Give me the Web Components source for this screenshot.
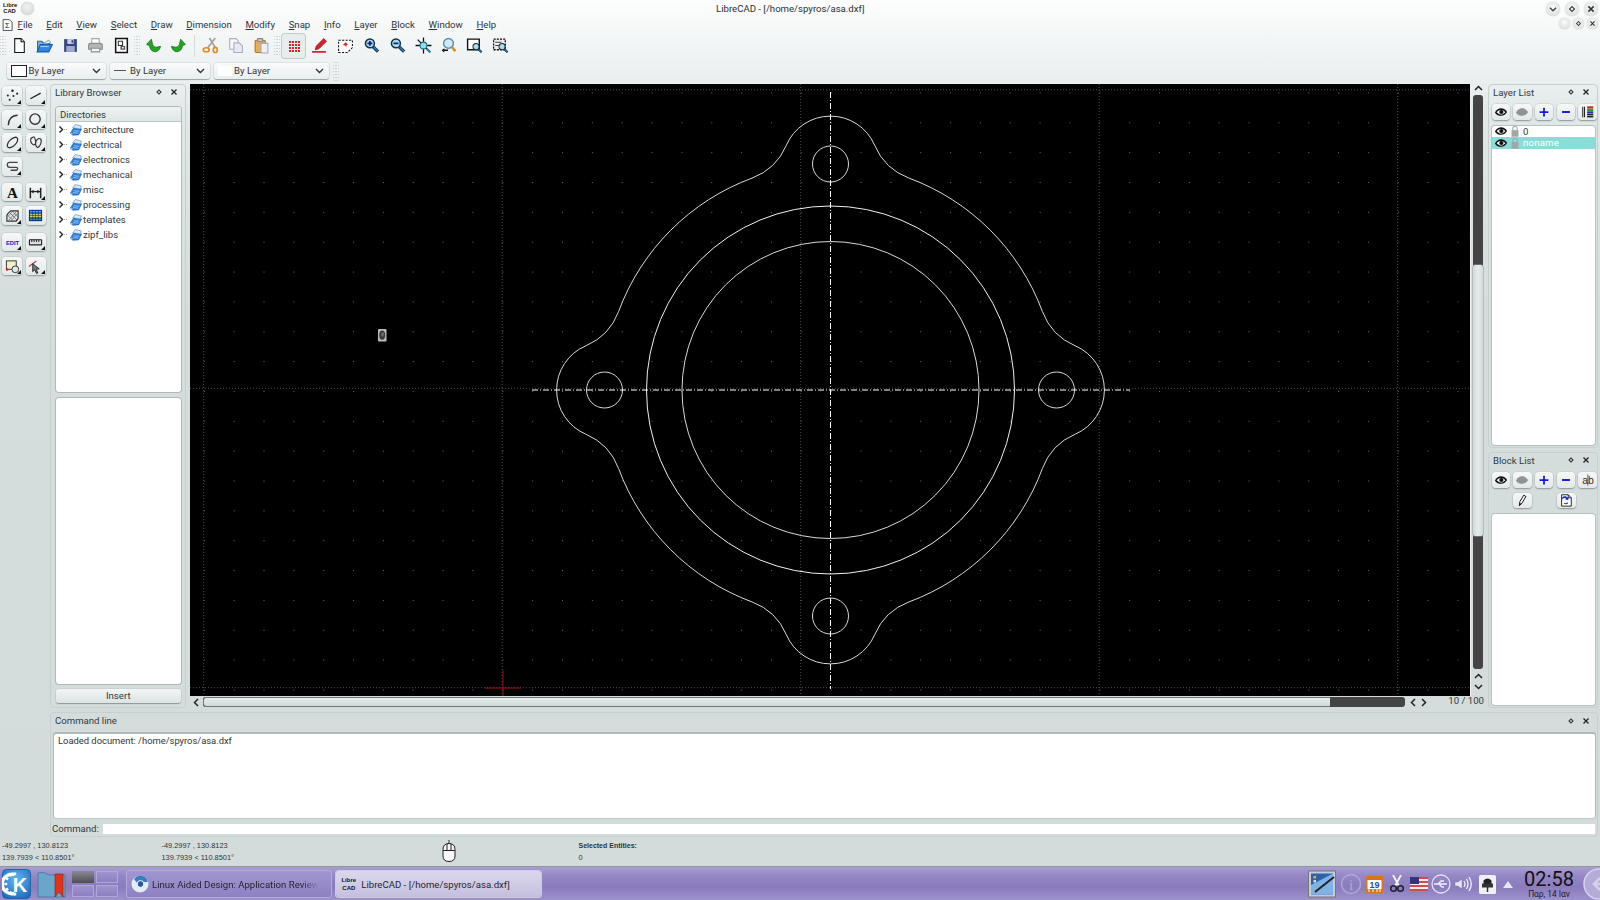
<!DOCTYPE html>
<html>
<head>
<meta charset="utf-8">
<title>LibreCAD</title>
<style>
html, body { margin: 0; height: 900px; overflow: hidden; }
body {
    display: flex;
    flex-direction: column;
    width: 1600px;
    font: 9.6px Roboto, "Noto Sans", sans-serif;
    color: #2b3033;
    background: linear-gradient(#fdfdfd 0, #f1f4f4 50px, #dfe6e6 130px, #d6dedd 300px, #d4dcdb 866px);
}
.main { display: flex; height: 624px; }
</style>
</head>
<body>
<lc-titlebar></lc-titlebar>
<lc-menubar></lc-menubar>
<lc-toolbar></lc-toolbar>
<lc-combos></lc-combos>
<div class="main">
    <lc-toolcolumn></lc-toolcolumn>
    <lc-library></lc-library>
    <lc-canvas></lc-canvas>
    <lc-rightdocks></lc-rightdocks>
</div>
<lc-command></lc-command>
<lc-status></lc-status>
<lc-taskbar></lc-taskbar>

<script>
const mag = (inner, handle = '#1b7fc4', lens = '#a9dcef') => `
    <circle cx="6.5" cy="6" r="4.2" fill="${lens}" stroke="#14303f" stroke-width="1.4"/>
    <path d="M9.6 9.2l4.6 4.6" stroke="#123" stroke-width="3"/>
    <path d="M10 9.6l4 4" stroke="${handle}" stroke-width="1.6"/>${inner}`;

const EYE = (c, p) => `<path d="M1 8.5C3 5 5.5 3.8 8 3.8s5 1.2 7 4.2C13 11 10.5 12.4 8 12.4S3 11.5 1 8.5z" fill="${c}"/>
    <path d="M3 8.2C5 6 6.5 5.6 8 5.6s3.5.6 5 2.6c-2 2-3.5 2.6-5 2.6S5 10.2 3 8.2z" fill="#fff" opacity="${p}"/>
    <circle cx="8.4" cy="8" r="2.4" fill="${c}"/>`;

const ICONS = {
    new: `<path d="M3.5 1.5h6l3 3v10h-9z" fill="#fff" stroke="#111"/><path d="M9.5 1.5v3h3" fill="#ddd" stroke="#111"/>`,
    open: `<path d="M1.5 13.5V4h4l1 1.5h6.5V8" fill="#7db2e2" stroke="#2a62a8"/><path d="M7 6l5-3 2 2.5" fill="#fff" stroke="#9ab"/><path d="M1 14l3-7h11.5l-3.5 7z" fill="#2f86e6" stroke="#1d5aa8"/><path d="M4 9h8" stroke="#9cd0ff"/>`,
    save: `<path d="M2 2h12v12H2z" fill="#37447e"/><path d="M5 2h6v4.5H5z" fill="#c9cfe6"/><path d="M4 8.5h8V14H4z" fill="#a4abd0"/><path d="M9 3h1.4v2.5H9z" fill="#37447e"/>`,
    print: `<path d="M4.5 1.5h7v5h-7z" fill="#fff" stroke="#a5a5a5"/><path d="M1.5 8q0-2 2-2h9q2 0 2 2v3.5h-13z" fill="#b3b5b5" stroke="#8c8e8e"/><path d="M4 10.5h8v3.5H4z" fill="#f4f4f4" stroke="#8c8e8e"/>`,
    preview: `<path d="M2.5 1.5h11v13h-11z" fill="#fff" stroke="#111" stroke-width="1.4"/><path d="M5 4h4v4H5z" fill="none" stroke="#333"/><path d="M7 8.5h4.5v3.5H7z" fill="#555"/><path d="M8.5 9.5h1.6v1.4H8.5z" fill="#fff"/>`,
    undo: `<path d="M1.5 7L6 2l.8 3.6C7.3 8.8 9.2 10 12 9.4l2.6-.6C14 12.4 11 14.6 8 13.6 5.6 12.8 4.6 10.6 4.2 8z" fill="#22a81f" stroke="#0b6a0b" stroke-width=".7"/>`,
    redo: `<g transform="translate(16 0) scale(-1 1)"><path d="M1.5 7L6 2l.8 3.6C7.3 8.8 9.2 10 12 9.4l2.6-.6C14 12.4 11 14.6 8 13.6 5.6 12.8 4.6 10.6 4.2 8z" fill="#22a81f" stroke="#0b6a0b" stroke-width=".7"/></g>`,
    cut: `<path d="M12.5 1L5.5 10M7 1l5.5 9" stroke="#a2a2a2" stroke-width="1.6"/><ellipse cx="4" cy="12" rx="2.8" ry="1.9" fill="none" stroke="#e08a1e" stroke-width="1.6"/><ellipse cx="12.5" cy="12.2" rx="1.9" ry="2.4" fill="none" stroke="#e08a1e" stroke-width="1.6"/>`,
    copy: `<path d="M2.5 1.5h6l2 2v8h-8z" fill="#f6f6fb" stroke="#a9adc6"/><path d="M6.5 5.5h5l3 3v6h-8z" fill="#e8e9f3" stroke="#a9adc6"/>`,
    paste: `<rect x="2" y="3" width="9.5" height="11.5" rx="1" fill="#e9ad56" stroke="#b5741c"/><path d="M4.5 1.5h4.5v3H4.5z" fill="#c9c9c9" stroke="#888"/><path d="M7.5 6h6.5v9H7.5z" fill="#eef0f7" stroke="#a4a8bd"/>`,
    grid: `<g fill="#f02020"><rect x="3" y="3" width="2" height="2"/><rect x="6" y="3" width="2" height="2"/><rect x="9" y="3" width="2" height="2"/><rect x="12" y="3" width="2" height="2"/><rect x="3" y="6" width="2" height="2"/><rect x="6" y="6" width="2" height="2"/><rect x="9" y="6" width="2" height="2"/><rect x="12" y="6" width="2" height="2"/><rect x="3" y="9" width="2" height="2"/><rect x="6" y="9" width="2" height="2"/><rect x="9" y="9" width="2" height="2"/><rect x="12" y="9" width="2" height="2"/><rect x="3" y="12" width="2" height="2"/><rect x="6" y="12" width="2" height="2"/><rect x="9" y="12" width="2" height="2"/><rect x="12" y="12" width="2" height="2"/></g>`,
    draft: `<path d="M5 8.5l7-7 2.5 2.5-7 7-3.5 1z" fill="#d9202c" stroke="#8f1018" stroke-width=".7"/><path d="M1 14h13" stroke="#c8282c" stroke-width="1.6"/>`,
    redraw: `<path d="M1.5 3h13v7l-4.5 4.5h-8.5z" fill="#fff" stroke="#111" stroke-dasharray="2 1.3"/><path d="M5.5 7.5l2.5-2.5 2.5 2-1.5 .5 0 2-1.5-1.5z" fill="#ea2a2a"/>`,
    zoomin: mag(`<path d="M4.2 6h4.6M6.5 3.7v4.6" stroke="#0b1f86" stroke-width="1.6"/>`),
    zoomout: mag(`<path d="M4.2 6h4.6" stroke="#0b1f86" stroke-width="1.6"/>`),
    zoomauto: `<circle cx="8" cy="8" r="3.2" fill="#8fdcec" stroke="#1c6f8a"/><path d="M8 .5v4M8 11.5v4M.5 8h4M11.5 8h4M2.5 2.5l3 3M13.5 13.5l-3-3" stroke="#111" stroke-width="1.2"/><path d="M11 11l3.5 3.5" stroke="#1b7fc4" stroke-width="2"/>`,
    zoomprev: `<circle cx="8" cy="6" r="4.6" fill="#cfeaf6" stroke="#4b8fb4" stroke-width="1.3"/><path d="M11.2 9.4l3.3 4" stroke="#d88a2c" stroke-width="2.4"/><path d="M1.5 12.5l2.5-2v1.3h3.5v1.4H4v1.3z" fill="#111"/>`,
    zoomwin: `<path d="M1.5 2h11v10h-11z" fill="#fff" stroke="#111" stroke-width="1.3"/><g transform="translate(5 5) scale(.68)">${mag('')}</g>`,
    zoompan: `<path d="M1.5 2h11v10h-11z" fill="#eee" stroke="#111" stroke-width="1.2" stroke-dasharray="2 1"/><path d="M3 5h6M3 8h4" stroke="#444"/><g transform="translate(5 5) scale(.68)">${mag('')}</g>`,

    points: `<g fill="#222"><circle cx="8" cy="3" r="1.3"/><circle cx="13" cy="6" r="1.1"/><circle cx="3" cy="8" r="1.1"/><circle cx="9" cy="8.5" r="1.1"/><circle cx="5" cy="12.5" r="1.1"/></g>`,
    line: `<path d="M2.5 11.5L13.5 5.5" stroke="#222" stroke-width="1.3"/>`,
    arc: `<path d="M3.5 14C3.5 8 7.5 3.5 13.5 3.5" fill="none" stroke="#333" stroke-width="1.5"/>`,
    circle: `<circle cx="7.5" cy="7.5" r="5.5" fill="none" stroke="#333" stroke-width="1.5"/>`,
    ellipse: `<ellipse cx="8" cy="8" rx="7" ry="3.6" transform="rotate(-45 8 8)" fill="none" stroke="#333" stroke-width="1.4"/>`,
    spline: `<path d="M5 2.5C2 3 2 8 5 10c2 1.5 4-1 3-4S7 1 5 2.5zM8 8c1-3 3-5 5-4 2.5 1.5 .5 7-2 9-2 1-3-2-3-5z" fill="none" stroke="#333" stroke-width="1.2"/>`,
    poly: `<path d="M13.5 3.5H5Q2.5 3.5 2.5 6.2T5 9h7q1.5 0 1.5 1.5T12 12H6" fill="none" stroke="#444" stroke-width="1.4"/>`,
    text: `<text x="8" y="14" text-anchor="middle" font-family="'Liberation Serif',serif" font-weight="bold" font-size="16" fill="#111">A</text>`,
    dim: `<path d="M2.5 3v11M13.5 3v11" stroke="#222" stroke-width="1.6"/><path d="M3 7h10" stroke="#222" stroke-width="1.3"/><path d="M3 7l3-2v4zM13 7l-3-2v4z" fill="#222"/>`,
    hatch: `<path d="M3 6l3-3h8v8l-2 3H2V8z" fill="#e2e6e6" stroke="#333" stroke-width="1.2"/><path d="M4 13l8-9M7 13l6-7M3 9l5-5M5 5l8 8M3 8l5 5M8 3.5l6 6" stroke="#555" stroke-width=".7"/>`,
    image: `<rect x="1" y="2" width="14" height="12" fill="#0a1c8c"/><rect x="2" y="3" width="12" height="3" fill="#2fb7e8"/><rect x="2" y="6.5" width="12" height="3.5" fill="#e6d34a"/><rect x="2" y="10" width="12" height="3" fill="#2ea54a"/><path d="M5 2v12M8 2v12M11 2v12M1 5h14M1 8h14M1 11h14" stroke="#0a1c8c" stroke-width=".6"/>`,
    edit: `<text x="8" y="10.5" text-anchor="middle" font-family="'Liberation Sans',sans-serif" font-weight="bold" font-size="6.2" fill="#1515e0">EDIT</text>`,
    measure: `<rect x="1.5" y="5" width="13" height="5.5" rx=".5" fill="#ddd" stroke="#222" stroke-width="1.2"/><path d="M4 5v2.5M6.5 5v2.5M9 5v2.5M11.5 5v2.5" stroke="#222"/>`,
    selblock: `<rect x="1.5" y="2" width="10.5" height="9" fill="#f3f0c8" stroke="#333"/><circle cx="11" cy="11" r="3.6" fill="#e6e6e6" stroke="#333"/><rect x="1" y="10" width="2.4" height="2.4" fill="#d42020"/>`,
    seltool: `<path d="M1 8L9 2" stroke="#d42020" stroke-width="1.2"/><path d="M5 5l7 5.5-3.2 .5L10.5 15 9 15.5 7.3 11.5 5 13.5z" fill="#777" stroke="#111" stroke-width=".8"/>`,

    eye: EYE('#111', 1),
    eyeoff: EYE('#8e9494', 0),
    plus: `<path d="M3 8h10M8 3v10" stroke="#1414e6" stroke-width="2"/>`,
    minus: `<path d="M3.5 8h9" stroke="#1414e6" stroke-width="2.2"/>`,
    layers: `<path d="M2 2v12M4 2v12" stroke="#222" stroke-width="1.2"/><rect x="7" y="1.5" width="7" height="2.6" fill="#e02020"/><rect x="7" y="4.5" width="7" height="2.4" fill="#20a030"/><rect x="7" y="7.2" width="7" height="2.4" fill="#2030d0"/><rect x="7" y="10" width="7" height="1.8" fill="#222"/><rect x="7" y="12.4" width="7" height="1.8" fill="#222"/>`,
    ab: `<text x="8" y="12.5" text-anchor="middle" font-family="'Liberation Sans',sans-serif" font-size="12" fill="#333">ab</text><path d="M7.8 1.5v13" stroke="#333" stroke-width=".8"/>`,
    pencil: `<path d="M5 14.5l.5-4.5L10 2.5l2.5 1.5-4.5 7.5z" fill="#fff" stroke="#111" stroke-width="1.1"/><path d="M5 14.5l.5-3 2 1z" fill="#111"/>`,
    insert: `<path d="M3 2h7.5l3.5 3.5V15H3z" fill="#fff" stroke="#111"/><path d="M10.5 2v3.5H14" fill="none" stroke="#111"/><path d="M3 6c1.5-3 5-3 6.5-1l1.5-1-.5 4-3.5-.5 1.2-1C7 5.5 5 5.5 4 7z" fill="#1430d8"/><path d="M10 11c-1 1.5-3 1.5-4 .5" stroke="#1430d8" stroke-width="1.2" fill="none"/>`,
    lock: `<path d="M5.5 7V5a2.5 2.5 0 015 0v2" fill="none" stroke="#9aa" stroke-width="1.2"/><rect x="4" y="7" width="8" height="7.5" fill="#a2a6a6"/>`,
    libfolder: `<path d="M.5 12l4.5-7 10.5 1.5-4 8-8 .5z" fill="#2f7fd8" stroke="#17528f" stroke-width=".7"/><path d="M3.5 5L7 .8l8 1.7-.8 4.2z" fill="#d6e8f8" stroke="#3e7cb8" stroke-width=".7"/><path d="M5 9l7.5 .7M4 11.5l7 .7" stroke="#bfe0ff" stroke-width=".9"/><circle cx="2" cy="13" r="1.5" fill="#9cc7ee"/>`,
    menudoc: `<path d="M1.5 .8h8l4 3.5v11h-12z" fill="#fff" stroke="#222"/><text x="7" y="11.5" text-anchor="middle" font-family="'Liberation Sans',sans-serif" font-size="10" fill="#222">Σ</text>`
};

class LcIcon extends HTMLElement {
    connectedCallback() {
        const size = this.getAttribute('size') || 16;
        this.attachShadow({ mode: 'open' }).innerHTML = `
            <style>:host { display: inline-flex; width: ${size}px; height: ${size}px; flex: none; } svg { display: block; }</style>
            <svg width="${size}" height="${size}" viewBox="0 0 16 16">${ICONS[this.getAttribute('name')]}</svg>`;
    }
}
customElements.define('lc-icon', LcIcon);

// round raised button used by the tool column and the dock toolbars
class LcTool extends HTMLElement {
    connectedCallback() {
        const corner = this.hasAttribute('corner') ? '<i></i>' : '';
        this.attachShadow({ mode: 'open' }).innerHTML = `
            <style>
                :host {
                    display: flex; align-items: center; justify-content: center; position: relative;
                    box-sizing: border-box; width: var(--w, 20px); height: var(--h, 18.5px);
                    border-radius: 4px; background: linear-gradient(#f6f8f8, #e2e8e8);
                    box-shadow: 0 1px 1.5px #8d9797, 0 0 0 .5px #c2cbcb;
                }
                i { position: absolute; right: 1px; bottom: 1px; width: 0; height: 0;
                    border-left: 4px solid transparent; border-bottom: 4px solid #111; }
            </style>
            <lc-icon name="${this.getAttribute('icon')}" size="${this.getAttribute('size') || 15}"></lc-icon>${corner}`;
    }
}
customElements.define('lc-tool', LcTool);

// small round window decoration button
class LcDeco extends HTMLElement {
    connectedCallback() {
        const r = this.getAttribute('size') || 14;
        const glyphs = {
            down: '<path d="M4.5 6.5L8 10l3.5-3.5" stroke="#444" stroke-width="1.6" fill="none"/>',
            float: '<rect x="6" y="6" width="4" height="4" transform="rotate(45 8 8)" fill="none" stroke="#444" stroke-width="1.4"/>',
            close: '<path d="M5 5l6 6M11 5l-6 6" stroke="#333" stroke-width="1.7"/>',
            none: ''
        };
        this.attachShadow({ mode: 'open' }).innerHTML = `
            <style>
                :host { display: flex; width: ${r}px; height: ${r}px; border-radius: 50%; flex: none;
                    background: radial-gradient(circle at 50% 40%, #fafafa, #dfe3e3 70%, #bcc2c2);
                    box-shadow: 0 0 1px #999; }
            </style>
            <svg viewBox="0 0 16 16" width="${r}" height="${r}">${glyphs[this.getAttribute('kind')]}</svg>`;
    }
}
customElements.define('lc-deco', LcDeco);

class LcTitlebar extends HTMLElement {
    connectedCallback() {
        this.attachShadow({ mode: 'open' }).innerHTML = `
            <style>
                :host { display: grid; grid-template-columns: 716px auto 1fr; align-items: center; height: 16px; }
                .left { display: flex; align-items: center; padding-left: 3px; gap: 5px; }
                .logo { font: bold 5.8px/6.4px "Liberation Sans", sans-serif; color: #111; text-align: center; width: 13px; }
                .ball { width: 13px; height: 13px; border-radius: 50%; background: radial-gradient(circle at 50% 40%, #f2f2f2, #cfd2d2); box-shadow: 0 0 1px #888; }
                .title { color: #2b3033; }
                .right { display: flex; justify-content: flex-end; gap: 5px; padding-right: 2px; padding-top: 1px; }
            </style>
            <div class="left"><div class="logo">Libre<br>CAD</div><div class="ball"></div></div>
            <div class="title">LibreCAD - [/home/spyros/asa.dxf]</div>
            <div class="right"><lc-deco kind="down"></lc-deco><lc-deco kind="float"></lc-deco><lc-deco kind="close"></lc-deco></div>`;
    }
}
customElements.define('lc-titlebar', LcTitlebar);

class LcMenubar extends HTMLElement {
    connectedCallback() {
        const items = ['File', 'Edit', 'View', 'Select', 'Draw', 'Dimension', 'Modify', 'Snap', 'Info', 'Layer', 'Block', 'Window', 'Help'];
        this.attachShadow({ mode: 'open' }).innerHTML = `
            <style>
                :host { display: flex; align-items: center; height: 17px; padding-left: 2px; }
                nav { display: flex; gap: 13.7px; margin-left: 3.6px; }
                span { display: inline-block; color: #2f3538; }
                span::first-letter { text-decoration: underline; }
                .right { margin-left: auto; display: flex; gap: 3px; padding-right: 2.5px; margin-top: -3px; }
            </style>
            <lc-icon name="menudoc" size="12"></lc-icon>
            <nav>${items.map(i => `<span>${i}</span>`).join('')}</nav>
            <div class="right"><lc-deco kind="none" size="11"></lc-deco><lc-deco kind="float" size="11"></lc-deco><lc-deco kind="close" size="11"></lc-deco></div>`;
    }
}
customElements.define('lc-menubar', LcMenubar);

const GRIP = `<b class="grip"></b>`;
const GRIP_CSS = `.grip { width: 6px; height: 22px; flex: none; box-sizing: border-box;
    background: radial-gradient(circle, #aab3b3 .6px, transparent .9px) center top / 3px 3px; background-repeat: repeat; }`;

class LcToolbar extends HTMLElement {
    connectedCallback() {
        const cell = n => `<div class="cell${n === 'grid' ? ' on' : ''}"><lc-icon name="${n}" size="${n === 'grid' ? 16 : 17}"></lc-icon></div>`;
        const group = list => list.map(cell).join('');
        this.attachShadow({ mode: 'open' }).innerHTML = `
            <style>
                :host { display: flex; align-items: center; height: 25px; padding-left: .25px; }
                .cell { width: 25.6px; height: 24px; flex: none; display: flex; align-items: center; justify-content: center; box-sizing: border-box; }
                .on { border-radius: 3px; background: #e7ecec; box-shadow: 0 0 0 1px #c3cccc; width: 23px; margin: 0 1.3px; }
                .last { display: flex; margin-left: .5px; }
                .last .cell { width: 25.9px; }
                .last .on { width: 23px; margin: 0 1.45px; }
                .sep { width: 6px; flex: none; display: flex; justify-content: center; }
                .sep::before { content: ""; width: 1px; height: 22px; background: #d5dbdb; }
                ${GRIP_CSS}
            </style>
            ${GRIP}${group(['new', 'open', 'save', 'print', 'preview'])}
            ${GRIP}${group(['undo', 'redo'])}<div class="sep"></div>
            ${group(['cut', 'copy', 'paste'])}
            ${GRIP}<div class="last">${group(['grid', 'draft', 'redraw', 'zoomin', 'zoomout', 'zoomauto', 'zoomprev', 'zoomwin', 'zoompan'])}</div>`;
    }
}
customElements.define('lc-toolbar', LcToolbar);

class LcCombos extends HTMLElement {
    connectedCallback() {
        const arrow = `<svg width="9" height="6" viewBox="0 0 9 6"><path d="M1 1l3.5 3.5L8 1" stroke="#333" stroke-width="1.4" fill="none"/></svg>`;
        this.attachShadow({ mode: 'open' }).innerHTML = `
            <style>
                :host { display: flex; align-items: center; gap: 4px; height: 26px; padding: 0 0 1px 7px; box-sizing: border-box; }
                .combo { display: flex; align-items: center; height: 16px; box-sizing: border-box; padding: 0 5px 0 4px; border-radius: 3px;
                    background: linear-gradient(#fafbfb, #e9eeee); box-shadow: 0 1px 1px #9aa3a3, 0 0 0 .5px #ccd4d4; color: #2f3538; }
                .swatch { width: 14px; height: 10px; border: 1px solid #222; background: #fff; margin-right: 1.5px; flex: none; }
                .rule { width: 12px; height: 1px; background: #555; margin-right: 4px; flex: none; }
                .blank { width: 14px; height: 10px; background: #fff; margin-right: 2px; flex: none; }
                span { flex: 1; }
                ${GRIP_CSS}
                .grip { height: 20px; }
            </style>
            <div class="combo" style="width:99px"><div class="swatch"></div><span>By Layer</span>${arrow}</div>
            <div class="combo" style="width:100px"><div class="rule"></div><span>By Layer</span>${arrow}</div>
            <div class="combo" style="width:115px"><div class="blank"></div><span>By Layer</span>${arrow}</div>
            ${GRIP}`;
    }
}
customElements.define('lc-combos', LcCombos);

class LcToolcolumn extends HTMLElement {
    connectedCallback() {
        const rows = [
            ['points', 'line', 2], ['arc', 'circle', 5.8], ['ellipse', 'spline', 4.5], ['poly', '', 5.5],
            ['text', 'dim', 7.2], ['hatch', 'image', 4.8], ['edit', 'measure', 8.2], ['selblock', 'seltool', 5.5]
        ];
        const btn = n => n ? `<lc-tool icon="${n}" ${n === 'image' || n === 'text' ? '' : 'corner'}></lc-tool>` : '<div></div>';
        this.attachShadow({ mode: 'open' }).innerHTML = `
            <style>
                :host { display: block; width: 50px; flex: none; padding-left: 2px; box-sizing: border-box; }
                .row { display: grid; grid-template-columns: 20px 20px; column-gap: 3.5px; }
            </style>
            ${rows.map(r => `<div class="row" style="margin-top:${r[2]}px">${btn(r[0])}${btn(r[1])}</div>`).join('')}`;
    }
}
customElements.define('lc-toolcolumn', LcToolcolumn);

// dock widget frame: caption with float and close buttons, content in the slot
class LcDock extends HTMLElement {
    connectedCallback() {
        this.attachShadow({ mode: 'open' }).innerHTML = `
            <style>
                :host { display: flex; flex-direction: column; box-sizing: border-box; border: 1px solid #c6d0cf; border-radius: 4px; }
                header { display: flex; align-items: center; height: var(--head, 14px); padding: 0 6px 0 4px; flex: none; color: #2f3a3e; }
                header span { flex: 1; }
                svg { margin-left: 5.5px; }
            </style>
            <header><span>${this.getAttribute('caption')}</span>
                <svg viewBox="0 0 16 16" width="10" height="10"><rect x="5.8" y="5.8" width="4.4" height="4.4" transform="rotate(45 8 8)" fill="none" stroke="#333" stroke-width="1.8"/></svg>
                <svg viewBox="0 0 16 16" width="10" height="10"><path d="M4 4l8 8M12 4l-8 8" stroke="#222" stroke-width="2"/></svg>
            </header>
            <slot></slot>`;
    }
}
customElements.define('lc-dock', LcDock);

class LcLibrary extends HTMLElement {
    connectedCallback() {
        const dirs = ['architecture', 'electrical', 'electronics', 'mechanical', 'misc', 'processing', 'templates', 'zipf_libs'];
        this.attachShadow({ mode: 'open' }).innerHTML = `
            <style>
                :host { display: block; width: 136px; flex: none; height: 624px; }
                lc-dock { height: 100%; padding-bottom: 4px; }
                .box { background: #fff; border-radius: 3px; box-shadow: 0 0 0 1px #aeb9b9; margin: 0 4.5px 0 5px; }
                .dirs { height: 285px; margin-top: 8px; overflow: hidden; }
                .dirs h4 { margin: 0; font: inherit; height: 14px; line-height: 15px; padding-left: 4px; background: linear-gradient(#eef2f2, #dfe6e6); border-bottom: 1px solid #bcc6c6; color: #2f3a3e; }
                .item { display: flex; align-items: center; height: 15px; color: #2f3a3e; padding-left: 1px; }
                .item svg { margin-right: 2px; }
                .item span { margin-left: 1px; }
                .files { height: 286px; margin-top: 6px; }
                .insert { margin: 5px 4.5px 0 5px; height: 14px; line-height: 14px; text-align: center; border-radius: 3px;
                    background: linear-gradient(#f2f5f5, #dde4e4); box-shadow: 0 1px 1px #8d9797, 0 0 0 .5px #c2cbcb; color: #2f3a3e; }
            </style>
            <lc-dock caption="Library Browser">
                <div class="box dirs"><h4>Directories</h4>
                    ${dirs.map(d => `<div class="item"><svg width="11" height="9" viewBox="0 0 11 9"><path d="M2.5 1.5L5.5 4.5 2.5 7.5" stroke="#222" stroke-width="1.4" fill="none"/><path d="M7 4.5h4" stroke="#aaa" stroke-dasharray="1 1"/></svg><lc-icon name="libfolder" size="12"></lc-icon><span>${d}</span></div>`).join('')}
                </div>
                <div class="box files"></div>
                <div class="insert">Insert</div>
            </lc-dock>`;
    }
}
customElements.define('lc-library', LcLibrary);

class LcCanvas extends HTMLElement {
    connectedCallback() {
        // grid: one dot every 29.85px, a dotted meta line every 10 dots
        const metaX = [203.7, 502.2, 800.7, 1099.2, 1397.7].map(x => `<path d="M${x} 84V696"/>`).join('');
        const metaY = [89.8, 388.3, 687.7].map(y => `<path d="M190 ${y}H1470"/>`).join('');
        const holes = [[-226, 0], [226, 0], [0, -226], [0, 226]].map(p => `<circle cx="${p[0]}" cy="${p[1]}" r="18"/>`).join('');
        // outer contour: lobes r48 on a r226 body, joined by r60 fillets
        const outline = `M-244.76 44.13A48 48 0 0 1 -244.76 -44.13A60 60 0 0 0 -211.9 -78.5A226 226 0 0 1 -78.5 -211.9
            A60 60 0 0 0 -44.13 -244.76A48 48 0 0 1 44.13 -244.76A60 60 0 0 0 78.5 -211.9A226 226 0 0 1 211.9 -78.5
            A60 60 0 0 0 244.76 -44.13A48 48 0 0 1 244.76 44.13A60 60 0 0 0 211.9 78.5A226 226 0 0 1 78.5 211.9
            A60 60 0 0 0 44.13 244.76A48 48 0 0 1 -44.13 244.76A60 60 0 0 0 -78.5 211.9A226 226 0 0 1 -211.9 78.5
            A60 60 0 0 0 -244.76 44.13Z`;
        const chev = d => `<svg width="9" height="9" viewBox="0 0 9 9"><path d="${d}" stroke="#222" stroke-width="1.5" fill="none"/></svg>`;
        this.attachShadow({ mode: 'open' }).innerHTML = `
            <style>
                :host { display: grid; grid-template-columns: 1280px 15px; grid-template-rows: 612px 12px; width: 1295px; margin-left: 4px; flex: none; }
                .view { background: #000; border-right: 1px solid #eef1f1; box-sizing: content-box; width: 1280px; height: 612px; }
                svg.draw { display: block; }
                .v { display: flex; flex-direction: column; align-items: center; margin-left: 1px; }
                .v svg { flex: none; }
                .vtrack { width: 10px; margin: 2px 0 3px; height: 574px; background: #444; border-radius: 3px; display: flex; flex-direction: column; padding-top: 170px; box-sizing: border-box; }
                .vthumb { height: 271px; background: linear-gradient(90deg, #cfd9d9, #e6eded 50%, #cfd9d9); border-radius: 2px; box-shadow: 0 0 0 .5px #999; }
                .h { display: flex; align-items: center; height: 12px; padding-left: 2px; }
                .htrack { width: 1201.5px; height: 10px; margin-left: 2px; background: #444; border-radius: 3px; }
                .hthumb { width: 1127px; height: 10px; background: linear-gradient(#e6eded, #cfd9d9); border: 1px solid #6e7878; border-right: 0; box-sizing: border-box; border-radius: 3px 0 0 3px; }
                .page { width: 15px; position: relative; }
                .page span { position: absolute; right: 1px; top: -1px; white-space: nowrap; color: #2f3a3e; }
            </style>
            <div class="view">
                <svg class="draw" width="1280" height="612" viewBox="190 84 1280 612">
                    <defs>
                        <pattern id="dots" patternUnits="userSpaceOnUse" x="562" y="122.3" width="29.85" height="29.85">
                            <rect width="1" height="1" fill="#6a6a6a"/>
                        </pattern>
                    </defs>
                    <rect x="190" y="84" width="1280" height="612" fill="url(#dots)"/>
                    <g stroke="#4d4d4d" stroke-dasharray="1 2" fill="none">${metaX}${metaY}</g>
                    <g fill="none" stroke="#d8d8d8" stroke-width="1" transform="translate(830.5 390)">
                        <circle r="148.5"/>
                        <circle r="184" stroke="#f0f0f0"/>
                        ${holes}
                        <path d="${outline}"/>
                    </g>
                    <g stroke="#fff" stroke-dasharray="6 2 1 2">
                        <path d="M532 390H1130"/>
                        <path d="M830.5 92V689"/>
                    </g>
                    <path d="M485 688H521M503 670V696" stroke="#a30d0d" stroke-width="1"/>
                    <rect x="378" y="329" width="8.5" height="12.5" rx="1" fill="#b9bdbd"/>
                    <ellipse cx="382.2" cy="335.2" rx="3" ry="4.6" fill="#3d3a44"/>
                    <ellipse cx="382.6" cy="334.5" rx="1.3" ry="2.2" fill="#5d7d5a"/>
                </svg>
            </div>
            <div class="v">
                ${chev('M1 6l3.5-3.5L8 6')}
                <div class="vtrack"><div class="vthumb"></div></div>
                ${chev('M1 6l3.5-3.5L8 6')}
                <div style="height:1px"></div>
                ${chev('M1 3l3.5 3.5L8 3')}
            </div>
            <div class="h">
                ${chev('M6 1L2.5 4.5 6 8')}
                <div class="htrack"><div class="hthumb"></div></div>
                <div style="width:4px"></div>
                ${chev('M6 1L2.5 4.5 6 8')}
                <div style="width:1px"></div>
                ${chev('M3 1l3.5 3.5L3 8')}
            </div>
            <div class="page"><span>10 / 100</span></div>`;
    }
}
customElements.define('lc-canvas', LcCanvas);

class LcRightdocks extends HTMLElement {
    connectedCallback() {
        const w = n => `<lc-tool icon="${n}" size="14"></lc-tool>`;
        const row = (name, cls) => `<div class="layer ${cls}"><lc-icon name="eye" size="14"></lc-icon><lc-icon name="lock" size="14"></lc-icon><span>${name}</span></div>`;
        this.attachShadow({ mode: 'open' }).innerHTML = `
            <style>
                :host { display: flex; flex-direction: column; gap: 4px; width: 110px; margin-left: 3px; flex: none; --w: 18.5px; --h: 15.5px; height: 624px; }
                lc-dock { flex: none; }
                .bar { display: flex; gap: 3.2px; padding: 5px 0 0 2.5px; }
                .list { background: #fff; margin: 6px 2.5px 0 3px; border-radius: 3px; box-shadow: 0 0 0 1px #b7c1c1; }
                .layer { display: flex; align-items: center; height: 11.5px; padding-left: 2px; color: #2f3a3e; gap: 0; }
                .layer span { margin-left: 1px; letter-spacing: .2px; }
                .sel { background: #8adcd8; color: #fff; }
                .second { display: flex; padding: 5px 0 0 24px; gap: 25.5px; }
            </style>
            <lc-dock caption="Layer List" style="height:364px">
                <div class="bar">${w('eye')}${w('eyeoff')}${w('plus')}${w('minus')}${w('layers')}</div>
                <div class="list" style="height:319px">${row('0', '')}${row('noname', 'sel')}</div>
            </lc-dock>
            <lc-dock caption="Block List" style="height:256px">
                <div class="bar">${w('eye')}${w('eyeoff')}${w('plus')}${w('minus')}${w('ab')}</div>
                <div class="second">${w('pencil')}${w('insert')}</div>
                <div class="list" style="height:191px">&nbsp;</div>
            </lc-dock>`;
    }
}
customElements.define('lc-rightdocks', LcRightdocks);

class LcCommand extends HTMLElement {
    connectedCallback() {
        this.attachShadow({ mode: 'open' }).innerHTML = `
            <style>
                :host { display: block; margin: 4px 2px 0 50px; height: 125px; --head: 15px; }
                lc-dock { height: 100%; }
                .out { margin: 6px 2px 0 2.5px; height: 84px; background: #fff; border-radius: 2px; box-shadow: 0 -1px 0 1px #aeb9b9, 0 0 0 1px #bec8c8; padding: 1px 4.5px; box-sizing: border-box; color: #2f3538; font-size: 9.4px; }
                .line { display: flex; align-items: center; margin-top: 5px; padding-left: 1px; }
                .line span { width: 51px; flex: none; color: #2f3a3e; }
                .in { flex: 1; height: 10px; background: #fff; margin-right: 2px; }
            </style>
            <lc-dock caption="Command line">
                <div class="out">Loaded document: /home/spyros/asa.dxf</div>
                <div class="line"><span>Command:</span><div class="in"></div></div>
            </lc-dock>`;
    }
}
customElements.define('lc-command', LcCommand);

class LcStatus extends HTMLElement {
    connectedCallback() {
        this.attachShadow({ mode: 'open' }).innerHTML = `
            <style>
                :host { display: flex; height: 29px; box-sizing: border-box; padding-top: 3px; font: 7.4px/11.6px "Liberation Sans", sans-serif; color: #2f3538; }
                .c { flex: none; white-space: nowrap; }
                .mouse { position: relative; }
            </style>
            <div class="c" style="width:159.5px;padding-left:2px">-49.2997 , 130.8123<br>139.7939 &lt; 110.8501°</div>
            <div class="c" style="width:280px">-49.2997 , 130.8123<br>139.7939 &lt; 110.8501°</div>
            <div class="c mouse" style="width:137px">
                <svg width="14" height="22" viewBox="0 0 14 22"><path d="M7 0v4" stroke="#333"/><path d="M1 9.5Q1 3.5 7 3.5t6 6V16q0 5.5-6 5.5T1 16z" fill="#f6f6f6" stroke="#222"/><path d="M1 10.5h12M5 4v6.5M9 4v6.5" stroke="#222"/></svg>
            </div>
            <div class="c"><span style="font-weight:bold;font-size:7px">Selected Entities:</span><br>0</div>`;
    }
}
customElements.define('lc-status', LcStatus);

class LcTaskbar extends HTMLElement {
    connectedCallback() {
        const slot = (w, inner) => `<div class="t" style="width:${w}px">${inner}</div>`;
        this.attachShadow({ mode: 'open' }).innerHTML = `
            <style>
                :host { display: flex; align-items: center; height: 34px; width: 1600px; box-sizing: border-box; overflow: hidden; padding: 1px 0 0 1.5px;
                    border-top: 1px solid #8f9899; background: linear-gradient(#a99fd3 0, #9688c6 25%, #8a7bbd 60%, #9e92cd 100%); color: #25252f; }
                .k { width: 29px; height: 30px; flex: none; display: block; }
                .folder { width: 29px; height: 27px; margin-left: 6px; flex: none; }
                .pager { display: grid; grid-template-columns: 1fr 1fr; grid-template-rows: 1fr 1fr; gap: 2px; width: 46.5px; height: 26px; margin-left: 6px; flex: none; }
                .pager div { background: linear-gradient(#a196cf, #8b7dbf); box-shadow: inset 0 0 0 1px #b0a6d8; }
                .pager .cur { background: linear-gradient(#8a8a92, #4d4d55); box-shadow: none; }
                .task { display: flex; align-items: center; height: 26px; box-sizing: border-box; flex: none; border-radius: 3px; white-space: nowrap; overflow: hidden; }
                .t1 { width: 204.3px; margin-left: 9px; padding-left: 4px; background: linear-gradient(#a196d0, #8f81c2); box-shadow: 0 0 0 1px #b3aad9; }
                .t1 span { margin-left: 3px; -webkit-mask-image: linear-gradient(90deg, #000 90%, transparent); }
                .t2 { width: 205px; margin-left: 5px; padding-left: 5px; background: linear-gradient(#dcd8ea, #c5bfdf); box-shadow: 0 0 0 1px #cfcae4; }
                .t2 b { font: bold 6px/8px "Liberation Sans", sans-serif; text-align: center; width: 15px; color: #111; display: block; }
                .t2 span { margin-left: 5px; }
                .tray { margin-left: auto; display: flex; align-items: center; height: 32px; }
                .t { display: flex; align-items: center; justify-content: center; flex: none; }
                .clock { width: 68px; text-align: center; color: #111; line-height: 1; }
                .clock div { font-size: 20px; height: 20px; line-height: 20px; }
                .clock small { display: block; font-size: 8.4px; margin-top: 1px; line-height: 9px; color: #1c1c28; }
                .back { width: 17px; height: 32px; overflow: hidden; flex: none; }
            </style>
            <svg class="k" viewBox="0 0 29 30">
                <defs><radialGradient id="kb" cx=".5" cy=".35" r=".8"><stop offset="0" stop-color="#62b6f2"/><stop offset="1" stop-color="#1462b8"/></radialGradient></defs>
                <rect x=".5" y=".5" width="28" height="29" rx="4" fill="url(#kb)" stroke="#24649f"/>
                <path d="M12.5 5.5A9.8 9.8 0 1 0 12.5 24.5" fill="none" stroke="#fff" stroke-width="3.4"/>
                <path d="M13 3.5v2.8M8 5l1.4 2.4M3.8 9l2.4 1.4M2.4 15h2.8M3.8 21l2.4-1.4M8 25l1.4-2.4M13 26.5v-2.8" stroke="#fff" stroke-width="2.4"/>
                <text x="18" y="23" text-anchor="middle" font-family="'Liberation Sans',sans-serif" font-weight="bold" font-size="20" fill="#fff">K</text>
            </svg>
            <svg class="folder" viewBox="0 0 29 27"><path d="M1 26V2q6-2 11 2h16v22z" fill="#6aa6cc" stroke="#4d7d9e"/><path d="M18 3h8v23l-4-5-4 5z" fill="#e0331a" stroke="#8c2414" stroke-width=".6"/></svg>
            <div class="pager"><div class="cur"></div><div></div><div></div><div></div></div>
            <div class="task t1">
                <svg width="18" height="20" viewBox="0 0 18 20"><circle cx="9" cy="10" r="8.5" fill="#e3edf5"/><path d="M9 1.5A8.5 8.5 0 0 1 17 8H9a2 2 0 00-3 1L3 5A8.5 8.5 0 019 1.5z" fill="#3b7bc0"/><circle cx="9.5" cy="10" r="3.4" fill="#2458a8" stroke="#fff"/></svg>
                <span style="margin-left:3px">Linux Aided Design: Application Review</span>
            </div>
            <div class="task t2"><b>Libre<br>CAD</b><span>LibreCAD - [/home/spyros/asa.dxf]</span></div>
            <div class="tray">
                ${slot(28, `<svg width="28" height="28" viewBox="0 0 28 28"><rect x=".5" y="1" width="27" height="26" fill="#c6ccd4" stroke="#777"/><rect x="3" y="3.5" width="22" height="21" fill="#2a62b0"/><path d="M3 15L25 3.5v21H3z" fill="#7fb2e6"/><rect x="5.5" y="6" width="2.5" height="2.5" fill="#f0b030"/><rect x="5.5" y="10" width="2.5" height="2.5" fill="#ddd"/><path d="M7 22L26 7" stroke="#222" stroke-width="2"/></svg>`)}
                ${slot(29, `<svg width="22" height="22" viewBox="0 0 22 22"><circle cx="11" cy="11" r="9.5" fill="none" stroke="#b0a7d7" stroke-width="1.4"/><text x="11" y="16.5" text-anchor="middle" font-family="'Liberation Serif',serif" font-size="15" fill="#b0a7d7">i</text></svg>`)}
                ${slot(18, `<svg width="17" height="17" viewBox="0 0 17 17"><rect width="17" height="17" rx="1" fill="#e0701c"/><rect x="1.5" y="4" width="14" height="9" fill="#fff"/><text x="8.5" y="12" text-anchor="middle" font-family="'Liberation Sans',sans-serif" font-weight="bold" font-size="9" fill="#1d4fa8">19</text><path d="M3 13v3M7 13v3M11 13v3M14 13v3" stroke="#fff"/></svg>`)}
                ${slot(27, `<svg width="14" height="18" viewBox="0 0 14 18"><path d="M3 0l6 11M11 0L5 11" stroke="#f4f4f4" stroke-width="1.8"/><circle cx="3.5" cy="13.5" r="2.8" fill="none" stroke="#20202a" stroke-width="1.5"/><circle cx="10.5" cy="13.5" r="2.8" fill="none" stroke="#20202a" stroke-width="1.5"/></svg>`)}
                ${slot(18, `<svg width="18" height="14" viewBox="0 0 18 14"><rect width="18" height="14" fill="#f4f0f0"/><path d="M0 1h18M0 5h18M0 9h18M0 13h18" stroke="#d84a4a" stroke-width="2"/><rect width="9" height="7" fill="#33357a"/></svg>`)}
                ${slot(25, `<svg width="20" height="20" viewBox="0 0 20 20"><circle cx="10" cy="10" r="9" fill="none" stroke="#e6e3f2" stroke-width="1.3"/><path d="M3 10h13M7 10l3-3h3M8 10l3 3h2" stroke="#f2f0fa" stroke-width="1.3" fill="none"/></svg>`)}
                ${slot(20, `<svg width="18" height="18" viewBox="0 0 18 18"><path d="M1 7h3l4-3v10l-4-3H1z" fill="#e8e6f4" stroke="#7f75a8" stroke-width=".5"/><path d="M10 6q2 3 0 6M12.5 4q3 5 0 10M15 2q4.5 7 0 14" stroke="#f2f0fa" stroke-width="1.3" fill="none"/></svg>`)}
                ${slot(28, `<svg width="17" height="19" viewBox="0 0 17 19"><rect width="17" height="19" rx="1.5" fill="#f2f0f7"/><path d="M4.5 9V5.5q4-4 8 0V9z" fill="#222"/><rect x="3" y="8.5" width="11" height="4" fill="#333"/><path d="M8.5 12v5" stroke="#333" stroke-width="1.5"/></svg>`)}
                ${slot(14, `<svg width="10" height="7" viewBox="0 0 10 7"><path d="M5 0l5 7H0z" fill="#e8e6f4"/></svg>`)}
                <div class="clock"><div>02:58</div><small>Παρ, 14 Ιαν</small></div>
                <div class="back"><svg width="32" height="32" viewBox="0 0 32 32"><circle cx="16" cy="16" r="15" fill="#b4abd9" stroke="#d6d2ea" stroke-width="1.5"/><path d="M17 10l-6 6 6 6M11 16h12" stroke="#d6d2ea" stroke-width="2.5" fill="none"/></svg></div>
            </div>`;
    }
}
customElements.define('lc-taskbar', LcTaskbar);
</script>
</body>
</html>
